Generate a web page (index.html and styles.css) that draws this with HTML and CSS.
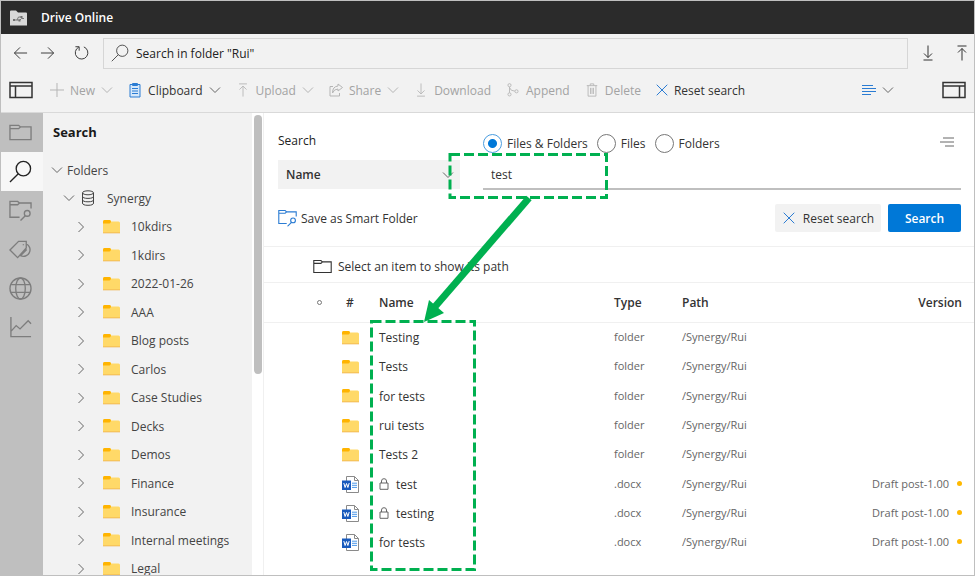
FILE: index.html
```html
<!DOCTYPE html>
<html lang="en">
<head>
    <meta charset="UTF-8">
    <meta name="viewport" content="width=device-width, initial-scale=1.0">
    <title>Drive Online</title>
    <link rel="stylesheet" href="styles.css">
</head>
<body>
    <!-- icon set -->
    <svg class="sprite" aria-hidden="true">
        <symbol id="down" viewBox="0 0 12 12"><path d="M1 3.500l5 5 5-5"/></symbol>
        <symbol id="right" viewBox="0 0 12 12"><path d="M3.500 1l5 5-5 5"/></symbol>
        <symbol id="close" viewBox="0 0 12 12"><path d="M.7.7l10.6 10.6M11.3.7L.7 11.3"/></symbol>
        <symbol id="to-bottom" viewBox="0 0 12 16"><path d="M6 .5v12M2 8.500l4 4 4-4M1.500 15h9"/></symbol>
        <symbol id="to-top" viewBox="0 0 12 16"><path d="M6 15.500v-12M2 7.500l4-4 4 4M1.500 1h9"/></symbol>
        <symbol id="lens" viewBox="0 0 24 24"><circle cx="15" cy="9" r="7.500"/><path d="M9.700 14.300L1 23"/></symbol>
        <symbol id="panel" viewBox="0 0 24 18"><path d="M1 1.500h22v15H1zM1 5h22M6.500 5v11.500"/></symbol>
        <symbol id="folder-line" viewBox="0 0 24 18"><path d="M1 5V1.500h9l2 1.700h11v13.300H1V5h9l2-1.800"/></symbol>
        <symbol id="smart" viewBox="0 0 24 22"><path d="M11 18H1V1.500h8l2 1.700h12V9M1 5h8l2-1.800M12 21.500l5-5"/><circle cx="19" cy="14" r="3"/></symbol>
        <symbol id="folder" viewBox="0 0 17 14">
            <path d="M0 1.500Q0 0 1.500 0H6.500Q7.500 0 8 1.500H15.500Q17 1.500 17 3V13H0z" fill="#ffd968"/>
            <path d="M0 1.500Q0 0 1.500 0H6.500Q8 0 8 1.500Q7.500 3.500 6.500 3.500H0z" fill="#ffb400"/>
            <path d="M0 12.500H17V13.300H0z" fill="#efb14c"/>
        </symbol>
        <symbol id="word" viewBox="0 0 17 17">
            <path d="M4.500.5h8l4 4v12H4.500z" fill="#fff" stroke="#8a8a8a"/>
            <path d="M12.500.5v4h4" fill="none" stroke="#8a8a8a"/>
            <path d="M10 7.200h5M10 9.300h5M10 11.400h5" stroke="#4a98ea"/>
            <path d="M0 4.500h9v9.500H0z" fill="#185abd"/>
            <path d="M1.800 7l1.300 4.500L4.500 7.500l1.400 4L7.200 7" fill="none" stroke="#fff"/>
        </symbol>
        <symbol id="lock" viewBox="0 0 10 12"><path d="M1 5h8v6.300H1zM2.500 5V3a2.500 2.300 0 0 1 5 0v2"/></symbol>
    </svg>

    <div class="app">
        <header class="title-bar">
            <svg class="logo" viewBox="0 0 17 16">
                <path d="M0 1.500Q0 .5 1 .5H6L8 2.500H16Q17 2.500 17 3.500V15.500H0z" fill="#d9d9d9"/>
                <path d="M4 10h3l1.500-3h3M7 10h3l1.500-1.500h2.500" fill="none" stroke="#777"/>
                <path d="M3 9h2v2H3zM10.500 6h2v2h-2zM8.500 9.500h2v2h-2z" fill="#707070"/>
            </svg>
            <span>Drive Online</span>
        </header>

        <div class="nav-bar">
            <button class="nav-btn" aria-label="Back"><svg viewBox="0 0 16 14"><path d="M15 7H1.500M7.500 1l-6 6 6 6"/></svg></button>
            <button class="nav-btn" aria-label="Forward"><svg viewBox="0 0 16 14"><path d="M1 7h13.500M8.500 1l6 6-6 6"/></svg></button>
            <button class="nav-btn reload" aria-label="Reload"><svg viewBox="0 0 16 16"><path d="M10.500 1.500A6.700 6.700 0 1 1 5 1.800M1.500 1.300H5.500V5.500"/></svg></button>
            <label class="address">
                <svg viewBox="0 0 24 24"><use href="#lens"/></svg>
                <input type="text" value='Search in folder "Rui"' aria-label="Address">
            </label>
            <button class="end-btn" aria-label="Downloads"><svg viewBox="0 0 12 16"><use href="#to-bottom"/></svg></button>
            <button class="end-btn" aria-label="Uploads"><svg viewBox="0 0 12 16"><use href="#to-top"/></svg></button>
        </div>

        <div class="toolbar">
            <button class="panel-btn" aria-label="Toggle left panel"><svg viewBox="0 0 24 18"><use href="#panel"/></svg></button>
            <button class="tool" disabled><svg class="ico" viewBox="0 0 14 14"><path d="M7 0v14M0 7h14"/></svg>New<svg class="chev"><use href="#down"/></svg></button>
            <button class="tool">
                <svg class="ico clip" viewBox="0 0 14 16"><path d="M2 2.500h10v12.500H2z" fill="#d6e8fa"/><path d="M4.500 1.500h5v2h-5zM4 6.500h6M4 9h6M4 11.500h6"/></svg>Clipboard<svg class="chev"><use href="#down"/></svg>
            </button>
            <button class="tool" disabled><svg class="ico" viewBox="0 0 12 16"><use href="#to-top"/></svg>Upload<svg class="chev"><use href="#down"/></svg></button>
            <button class="tool" disabled><svg class="ico" viewBox="0 0 14 14"><path d="M4 3.500H1V13h9.500V10M9 1l4.500 3.500L9 8V6Q5 6 3.500 10Q3.500 3.500 9 3z"/></svg>Share<svg class="chev"><use href="#down"/></svg></button>
            <button class="tool" disabled><svg class="ico" viewBox="0 0 12 16"><use href="#to-bottom"/></svg>Download</button>
            <button class="tool" disabled><svg class="ico" viewBox="0 0 14 16"><circle cx="3" cy="2.500" r="1.800"/><circle cx="3" cy="13" r="1.800"/><circle cx="11" cy="9.500" r="1.800"/><path d="M3 4.500v6.500M3 5q1 4.300 6 4.300"/></svg>Append</button>
            <button class="tool" disabled><svg class="ico" viewBox="0 0 14 16"><path d="M1 3h12M5 3V1h4v2M2.500 3v12h9V3M5.300 5.500v7M7 5.500v7M8.700 5.500v7"/></svg>Delete</button>
            <button class="tool"><svg class="cross blue" viewBox="0 0 12 12"><use href="#close"/></svg>Reset search</button>
            <button class="tool sort" aria-label="Sort"><svg class="ico blue" viewBox="0 0 14 12"><path d="M0 1.500h11M0 4.500h14M0 7.500h14M0 10.500h9"/></svg><svg class="chev"><use href="#down"/></svg></button>
            <button class="panel-btn flip" aria-label="Toggle right panel"><svg viewBox="0 0 24 18"><use href="#panel"/></svg></button>
        </div>

        <div class="body">
            <nav class="rail">
                <button aria-label="Folders"><svg viewBox="0 0 24 18"><use href="#folder-line"/></svg></button>
                <button class="active" aria-label="Search"><svg viewBox="0 0 24 24"><use href="#lens"/></svg></button>
                <button aria-label="Smart folders"><svg viewBox="0 0 24 22"><use href="#smart"/></svg></button>
                <button aria-label="Tags"><svg viewBox="0 0 24 22"><path d="M1 11.500L10 2.500h8v7L9 19.500zM18 5a6.800 6.800 0 1 1-6 12.500L18.500 11M15 6.500v-1"/></svg></button>
                <button aria-label="Web"><svg viewBox="0 0 24 24"><circle cx="12" cy="12" r="11"/><ellipse cx="12" cy="12" rx="5" ry="11"/><path d="M1.800 8h20.400M1.800 16h20.400"/></svg></button>
                <button aria-label="Reports"><svg viewBox="0 0 24 22"><path d="M2 0v20.500h21M2 15l5.500-6 4 3.500L20 4l3 3"/></svg></button>
            </nav>

            <aside class="side">
                <h2>Search</h2>
                <div class="branch root"><svg class="chev"><use href="#down"/></svg>Folders</div>
                <div class="branch drive">
                    <svg class="chev"><use href="#down"/></svg>
                    <svg class="disk" viewBox="0 0 14 16"><ellipse cx="7" cy="2.800" rx="5.500" ry="2"/><path d="M1.500 3v10q0 2.300 5.500 2.300t5.500-2.300V3M1.500 6.200q0 2.200 5.500 2.200t5.500-2.200M1.500 9.600q0 2.200 5.500 2.200t5.500-2.200"/></svg>
                    Synergy
                </div>
                <ul class="tree">
                    <li><svg class="chev"><use href="#right"/></svg><svg class="folder"><use href="#folder"/></svg>10kdirs</li>
                    <li><svg class="chev"><use href="#right"/></svg><svg class="folder"><use href="#folder"/></svg>1kdirs</li>
                    <li><svg class="chev"><use href="#right"/></svg><svg class="folder"><use href="#folder"/></svg>2022-01-26</li>
                    <li><svg class="chev"><use href="#right"/></svg><svg class="folder"><use href="#folder"/></svg>AAA</li>
                    <li><svg class="chev"><use href="#right"/></svg><svg class="folder"><use href="#folder"/></svg>Blog posts</li>
                    <li><svg class="chev"><use href="#right"/></svg><svg class="folder"><use href="#folder"/></svg>Carlos</li>
                    <li><svg class="chev"><use href="#right"/></svg><svg class="folder"><use href="#folder"/></svg>Case Studies</li>
                    <li><svg class="chev"><use href="#right"/></svg><svg class="folder"><use href="#folder"/></svg>Decks</li>
                    <li><svg class="chev"><use href="#right"/></svg><svg class="folder"><use href="#folder"/></svg>Demos</li>
                    <li><svg class="chev"><use href="#right"/></svg><svg class="folder"><use href="#folder"/></svg>Finance</li>
                    <li><svg class="chev"><use href="#right"/></svg><svg class="folder"><use href="#folder"/></svg>Insurance</li>
                    <li><svg class="chev"><use href="#right"/></svg><svg class="folder"><use href="#folder"/></svg>Internal meetings</li>
                    <li><svg class="chev"><use href="#right"/></svg><svg class="folder"><use href="#folder"/></svg>Legal</li>
                </ul>
            </aside>
            <div class="scroll"><div class="thumb"></div></div>

            <main class="main">
                <form class="search-form">
                    <label class="form-title" for="term">Search</label>
                    <div class="options">
                        <label><input type="radio" name="kind" checked>Files &amp; Folders</label>
                        <label><input type="radio" name="kind">Files</label>
                        <label><input type="radio" name="kind">Folders</label>
                        <svg class="lines" viewBox="0 0 14 10"><path d="M3 1h11M0 5h14M5 9h9"/></svg>
                    </div>
                    <div class="field">
                        <select aria-label="Search by"><option>Name</option></select>
                        <svg class="chev"><use href="#down"/></svg>
                    </div>
                    <input class="term" id="term" type="text" value="test">
                    <div class="actions">
                        <button type="button" class="save"><svg viewBox="0 0 24 22"><use href="#smart"/></svg>Save as Smart Folder</button>
                        <button type="reset" class="reset"><svg class="cross blue" viewBox="0 0 12 12"><use href="#close"/></svg>Reset search</button>
                        <button type="button" class="submit">Search</button>
                    </div>
                </form>

                <div class="path-bar"><svg viewBox="0 0 24 18"><use href="#folder-line"/></svg>Select an item to show its path</div>

                <table class="results">
                    <thead>
                        <tr>
                            <th class="c-mark"><span class="ring"></span></th>
                            <th class="c-icon">#</th>
                            <th class="c-name">Name</th>
                            <th class="c-type">Type</th>
                            <th class="c-path">Path</th>
                            <th class="c-version">Version</th>
                        </tr>
                    </thead>
                    <tbody>
                        <tr><td></td><td><svg class="folder"><use href="#folder"/></svg></td><td>Testing</td><td>folder</td><td>/Synergy/Rui</td><td></td></tr>
                        <tr><td></td><td><svg class="folder"><use href="#folder"/></svg></td><td>Tests</td><td>folder</td><td>/Synergy/Rui</td><td></td></tr>
                        <tr><td></td><td><svg class="folder"><use href="#folder"/></svg></td><td>for tests</td><td>folder</td><td>/Synergy/Rui</td><td></td></tr>
                        <tr><td></td><td><svg class="folder"><use href="#folder"/></svg></td><td>rui tests</td><td>folder</td><td>/Synergy/Rui</td><td></td></tr>
                        <tr><td></td><td><svg class="folder"><use href="#folder"/></svg></td><td>Tests 2</td><td>folder</td><td>/Synergy/Rui</td><td></td></tr>
                        <tr><td></td><td><svg class="word"><use href="#word"/></svg></td><td><svg class="lock"><use href="#lock"/></svg>test</td><td>.docx</td><td>/Synergy/Rui</td><td>Draft post-1.00<span class="dot"></span></td></tr>
                        <tr><td></td><td><svg class="word"><use href="#word"/></svg></td><td><svg class="lock"><use href="#lock"/></svg>testing</td><td>.docx</td><td>/Synergy/Rui</td><td>Draft post-1.00<span class="dot"></span></td></tr>
                        <tr><td></td><td><svg class="word"><use href="#word"/></svg></td><td>for tests</td><td>.docx</td><td>/Synergy/Rui</td><td>Draft post-1.00<span class="dot"></span></td></tr>
                    </tbody>
                </table>
            </main>
        </div>

        <!-- callout: search term -> matching names -->
        <svg class="callout" width="620" height="576" aria-hidden="true">
            <path class="dash" d="M450 154.500H606.500V197.500H450z"/>
            <path class="dash" d="M371.500 321.500H474.500V569.500H371.500z"/>
            <path class="shaft" d="M529 198L433 309"/>
            <path class="head" d="M424 322L429 300L444 313z"/>
        </svg>
    </div>
</body>
</html>
```
FILE: styles.css
```css
* {
    box-sizing: border-box;
}
body {
    margin: 0;
    font-family: "Open Sans", "Noto Sans", sans-serif;
    font-size: 12px;
    color: #333;
}
button, input, select {
    margin: 0;
    padding: 0;
    border: 0;
    background: none;
    font: inherit;
    color: inherit;
    outline: none;
}
button {
    display: flex;
    align-items: center;
    white-space: nowrap;
}
svg {
    display: block;
    flex: none;
    fill: none;
    stroke: currentColor;
}
.sprite {
    position: absolute;
    width: 0;
    height: 0;
}
.blue {
    color: #2b7cd3;
}
.chev {
    width: 12px;
    height: 12px;
    color: #666;
}
.cross {
    width: 12px;
    height: 12px;
}
.folder {
    width: 17px;
    height: 14px;
    stroke: none;
}
.app {
    position: relative;
    display: flex;
    flex-direction: column;
    height: 100vh;
    overflow: hidden;
    border: 1px solid #bfbfbf;
    background: #fff;
}

/* top bars */
.title-bar {
    display: flex;
    align-items: center;
    gap: 14px;
    height: 33px;
    padding-left: 9px;
    background: #2b2b2b;
    color: #fff;
    font-weight: 600;
}
.logo {
    width: 17px;
    height: 16px;
    stroke: none;
}
.nav-bar {
    display: flex;
    align-items: center;
    height: 38px;
    padding: 0 6px 0 12px;
    background: #f2f2f2;
}
.nav-btn {
    width: 27px;
}
.nav-btn svg {
    width: 15px;
    height: 14px;
}
.reload {
    width: 36px;
    padding-left: 7px;
}
.reload svg {
    height: 16px;
}
.address {
    flex: 1;
    display: flex;
    align-items: center;
    gap: 7px;
    height: 31px;
    padding-left: 7px;
    border: 1px solid #d6d6d6;
    color: #222;
}
.address svg {
    width: 18px;
    height: 18px;
}
.address input {
    flex: 1;
}
.end-btn {
    margin-left: 14px;
}
.end-btn + .end-btn {
    margin-left: 22px;
}
.end-btn svg {
    width: 12px;
    height: 16px;
}
.toolbar {
    display: flex;
    align-items: center;
    gap: 15px;
    height: 41px;
    padding: 0 8px 4px;
    border-bottom: 1px solid #d9d9d9;
    background: #f2f2f2;
}
.panel-btn {
    margin-right: 2px;
}
.panel-btn svg {
    width: 24px;
    height: 18px;
    stroke-width: 1.5;
}
.flip {
    margin: 0 0 0 33px;
    transform: scaleX(-1);
}
.tool {
    gap: 6px;
}
.tool:disabled {
    color: #a3a3a3;
}
.tool:disabled svg {
    color: #b5b5b5;
}
.ico {
    width: 14px;
    height: 14px;
}
.clip {
    height: 16px;
    color: #2b7cd3;
}
.sort {
    margin-left: auto;
}

/* left side */
.body {
    flex: 1;
    display: flex;
    min-height: 0;
}
.rail {
    width: 42px;
    background: #bfbfbf;
    color: #7d7d7d;
}
.rail button {
    justify-content: center;
    width: 42px;
    height: 39px;
    padding-right: 3px;
}
.rail svg {
    width: 23px;
    height: 23px;
    stroke-width: 1.4;
}
.rail .active {
    background: #f7f7f7;
    color: #222;
}
.side {
    width: 209px;
    padding-top: 9px;
    overflow: hidden;
    background: #f2f2f2;
    color: #444;
}
.side h2 {
    margin: 0 0 14px;
    padding-left: 10px;
    font-size: 13px;
    line-height: 20px;
    color: #1a1a1a;
}
.branch {
    display: flex;
    align-items: center;
    height: 28px;
}
.root {
    gap: 4px;
    padding-left: 8px;
}
.drive {
    gap: 6px;
    padding-left: 20px;
}
.disk {
    width: 14px;
    height: 16px;
    margin-right: 6px;
}
.tree {
    margin: 0;
    padding: 0;
    list-style: none;
}
.tree li {
    display: flex;
    align-items: center;
    height: 29px;
    padding-left: 32px;
}
.tree li:nth-child(even) {
    height: 28px;
}
.tree .folder {
    margin: 0 11px 0 16px;
}
.scroll {
    width: 12px;
    padding: 2px 2px 0;
    border-right: 1px solid #f0f0f0;
}
.thumb {
    width: 8px;
    height: 259px;
    border-radius: 4px;
    background: #bfbfbf;
}

/* search form */
.main {
    flex: 1;
    min-width: 0;
}
.search-form {
    display: grid;
    grid-template-columns: 182px 1fr;
    column-gap: 23px;
    padding: 18px 13px 14px 14px;
    border-bottom: 1px solid #f0f0f0;
}
.form-title {
    line-height: 20px;
    color: #222;
}
.options {
    display: flex;
    align-items: center;
    gap: 9px;
    height: 29px;
    padding-bottom: 4px;
}
.options label {
    display: flex;
    align-items: center;
    gap: 5px;
    white-space: nowrap;
}
.options input {
    appearance: none;
    width: 19px;
    height: 19px;
    border: 1px solid #777;
    border-radius: 50%;
}
.options input:checked {
    border-color: #4a9de0;
    background: radial-gradient(#0078d7 4px, transparent 5px);
}
.lines {
    width: 14px;
    height: 10px;
    margin: 0 7px 4px auto;
    color: #666;
}
.field {
    display: grid;
    align-items: center;
    height: 29px;
    background: #f2f2f2;
}
.field select {
    grid-area: 1 / 1;
    height: 29px;
    padding-left: 8px;
    appearance: none;
    font-weight: 600;
    color: #333;
}
.field .chev {
    grid-area: 1 / 1;
    justify-self: end;
    margin-right: 6px;
    pointer-events: none;
}
.term {
    height: 30px;
    padding-left: 8px;
    border-bottom: 2px solid #bfbfbf;
}
.actions {
    grid-column: 1 / 3;
    display: flex;
    align-items: center;
    margin-top: 14px;
}
.save {
    gap: 4px;
    margin-right: auto;
}
.save svg {
    width: 19px;
    height: 18px;
    color: #2b7cd3;
    stroke-width: 1.4;
}
.reset, .submit {
    height: 28px;
    border-radius: 2px;
}
.reset {
    gap: 8px;
    padding: 0 7px 0 8px;
    margin-right: 7px;
    background: #f2f2f2;
}
.submit {
    justify-content: center;
    width: 73px;
    background: #0078d7;
    color: #fff;
    font-weight: 600;
}
.path-bar {
    display: flex;
    align-items: center;
    gap: 6px;
    height: 36px;
    padding: 3px 0 0 49px;
    border-bottom: 1px solid #f0f0f0;
}
.path-bar svg {
    width: 19px;
    height: 15px;
    stroke-width: 1.4;
}

/* results */
.results {
    width: 100%;
    table-layout: fixed;
    border-collapse: collapse;
}
.results th {
    height: 39px;
    padding: 0;
    border-bottom: 1px solid #f0f0f0;
    font-weight: 600;
    text-align: left;
}
.results td {
    height: 29px;
    padding: 2px 0 0;
    white-space: nowrap;
}
.results tr:nth-child(3n) td {
    height: 30px;
}
.c-mark {
    width: 78px;
}
.c-icon {
    width: 37px;
}
.c-name {
    width: 235px;
}
.c-type {
    width: 68px;
}
.c-path {
    width: 120px;
}
.results .c-icon {
    padding-left: 4px;
}
.results .c-version {
    padding-right: 12px;
    text-align: right;
}
.ring {
    display: block;
    width: 5px;
    height: 5px;
    margin-left: 53px;
    border: 1px solid #777;
    border-radius: 50%;
}
.results td:nth-child(n+4) {
    padding-top: 0;
    font-size: 11px;
    color: #666;
}
.results td:last-child {
    padding-right: 12px;
    text-align: right;
}
.word {
    width: 17px;
    height: 17px;
    stroke: none;
}
.lock {
    display: inline-block;
    width: 10px;
    height: 12px;
    margin-right: 7px;
    vertical-align: -1px;
    color: #666;
}
.dot {
    display: inline-block;
    width: 5px;
    height: 5px;
    margin-left: 8px;
    border-radius: 50%;
    background: #ffb900;
    vertical-align: 2px;
}

.callout {
    position: absolute;
    top: -1px;
    left: -1px;
    pointer-events: none;
}
.dash {
    stroke: #00b050;
    stroke-width: 3;
    stroke-dasharray: 10 4;
}
.shaft {
    stroke: #00b050;
    stroke-width: 7;
}
.head {
    fill: #00b050;
    stroke: none;
}
```
